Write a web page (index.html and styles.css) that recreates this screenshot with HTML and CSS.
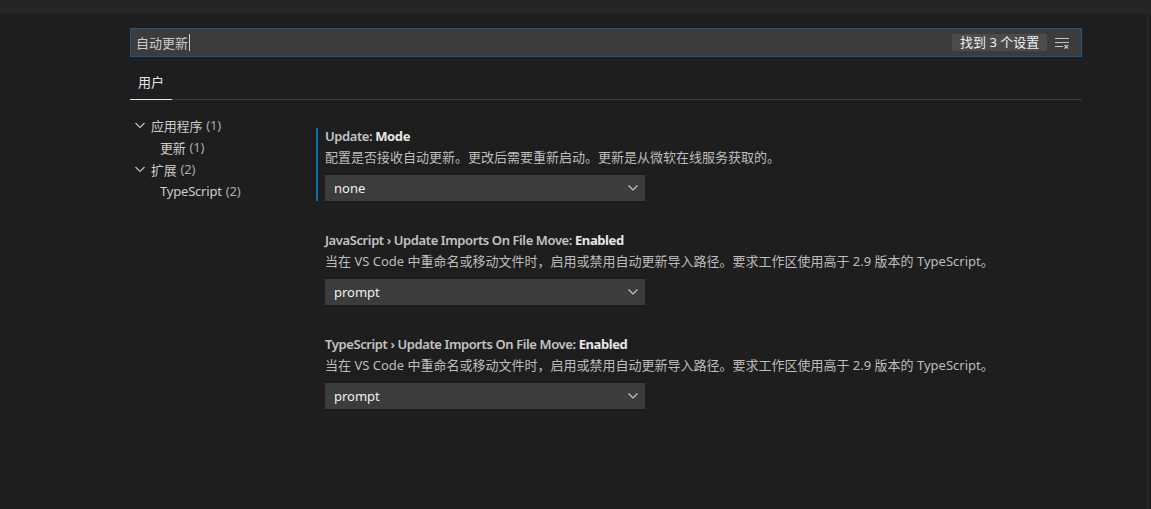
FILE: index.html
```html
<!DOCTYPE html>
<html lang="zh-CN">
<head>
<meta charset="utf-8">
<title>设置</title>
<link rel="stylesheet" href="styles.css">
</head>
<body>
<div class="topbar"></div>
<div class="workspace">
  <div class="page">
    <div class="search">
      <div class="search-text">自动更新<span class="caret"></span></div>
      <div class="badge">找到 3 个设置</div>
      <svg class="clear-icon" width="16" height="16" viewBox="0 0 16 16">
        <path d="M1 3.5h14M1 7.5h14M1 11.5h8" stroke="#c5c5c5" stroke-width="1" fill="none"/>
        <path d="M10.5 10l3.5 3.5M14 10l-3.5 3.5" stroke="#c5c5c5" stroke-width="1.3" fill="none"/>
      </svg>
    </div>
    <div class="tabs">
      <div class="tab active">用户</div>
    </div>
    <div class="body">
      <div class="tree">
        <div class="row lvl0">
          <svg class="chev" width="12" height="12" viewBox="0 0 12 12"><path d="M1.5 4l4.5 4.5L10.5 4" stroke="#c5c5c5" stroke-width="1.1" fill="none"/></svg>
          <span>应用程序</span><span class="count">(1)</span>
        </div>
        <div class="row lvl1"><span>更新</span><span class="count">(1)</span></div>
        <div class="row lvl0">
          <svg class="chev" width="12" height="12" viewBox="0 0 12 12"><path d="M1.5 4l4.5 4.5L10.5 4" stroke="#c5c5c5" stroke-width="1.1" fill="none"/></svg>
          <span>扩展</span><span class="count">(2)</span>
        </div>
        <div class="row lvl1"><span>TypeScript</span><span class="count">(2)</span></div>
      </div>
      <div class="settings">
        <div class="setting focused">
          <div class="title"><span class="cat">Update: </span><span class="label">Mode</span></div>
          <div class="desc">配置是否接收自动更新。更改后需要重新启动。更新是从微软在线服务获取的。</div>
          <div class="select"><span>none</span>
            <svg class="sel-chev" width="10" height="6" viewBox="0 0 10 6"><path d="M0.5 0.5l4.5 4.5L9.5 0.5" stroke="#c5c5c5" stroke-width="1.2" fill="none"/></svg>
          </div>
        </div>
        <div class="setting">
          <div class="title"><span class="cat">JavaScript › Update Imports On File Move: </span><span class="label">Enabled</span></div>
          <div class="desc">当在 VS Code 中重命名或移动文件时，启用或禁用自动更新导入路径。要求工作区使用高于 2.9 版本的 TypeScript。</div>
          <div class="select"><span>prompt</span>
            <svg class="sel-chev" width="10" height="6" viewBox="0 0 10 6"><path d="M0.5 0.5l4.5 4.5L9.5 0.5" stroke="#c5c5c5" stroke-width="1.2" fill="none"/></svg>
          </div>
        </div>
        <div class="setting">
          <div class="title"><span class="cat">TypeScript › Update Imports On File Move: </span><span class="label">Enabled</span></div>
          <div class="desc">当在 VS Code 中重命名或移动文件时，启用或禁用自动更新导入路径。要求工作区使用高于 2.9 版本的 TypeScript。</div>
          <div class="select"><span>prompt</span>
            <svg class="sel-chev" width="10" height="6" viewBox="0 0 10 6"><path d="M0.5 0.5l4.5 4.5L9.5 0.5" stroke="#c5c5c5" stroke-width="1.2" fill="none"/></svg>
          </div>
        </div>
      </div>
    </div>
  </div>
  <div class="edge"></div>
</div>
</body>
</html>
```
FILE: styles.css
```css
* { box-sizing: border-box; }
html, body { margin: 0; padding: 0; height: 100%; }
body {
  background: #1e1e1e;
  color: #cccccc;
  font-family: "Segoe UI", "Noto Sans", "Noto Sans CJK SC", sans-serif;
  font-size: 13px;
  display: flex;
  flex-direction: column;
  overflow: hidden;
}
.topbar { height: 14px; background: #252526; flex: none; }
.workspace { flex: 1; display: flex; }
.page { flex: 1; padding-left: 130px; }
.edge { width: 4px; border-left: 1px solid #2c2c2c; }

.search {
  margin-top: 14px;
  width: 952px;
  height: 29px;
  background: #3c3c3c;
  border: 1px solid #16598a;
  display: flex;
  align-items: center;
  padding-left: 5px;
  padding-right: 11px;
}
.search-text { flex: 1; color: #cccccc; display: flex; align-items: center; line-height: 18px; }
.caret { display: inline-block; width: 1px; height: 17px; background: #d0d0d0; margin-left: 1px; }
.badge {
  background: #4b4b4b;
  color: #f0f0f0;
  height: 17px;
  line-height: 17px;
  padding: 0 8px;
  border-radius: 2px;
  width: 95px;
  text-align: center;
  white-space: nowrap;
}
.clear-icon { margin-left: 7px; }

.tabs {
  width: 952px;
  height: 43px;
  border-bottom: 1px solid #3c3c3c;
  display: flex;
  align-items: flex-end;
}
.tab {
  padding: 6px 8px 0;
  height: 100%;
  display: flex;
  align-items: center;
  color: #e7e7e7;
  margin-bottom: -1px;
}
.tab.active { border-bottom: 1px solid #e7e7e7; }

.body { display: flex; }
.tree { width: 186px; margin-top: 14px; }
.row { height: 22px; display: flex; align-items: center; white-space: nowrap; color: #cccccc; letter-spacing: -0.2px; }
.row .count { margin-left: 4px; color: #ababab; }
.lvl0 { padding-left: 4px; }
.lvl0 .chev { margin-right: 5px; }
.lvl1 { padding-left: 30px; }

.settings { margin-top: 28px; }
.setting {
  height: 73px;
  margin-bottom: 31px;
  padding-left: 7px;
  border-left: 2px solid transparent;
}
.setting.focused { border-left-color: #0e70a8; }
.title { line-height: 16px; height: 16px; font-weight: 600; white-space: nowrap; letter-spacing: -0.4px; }
.title .cat { color: #c4c4c4; }
.title .label { color: #e8e8e8; font-weight: 700; }
.desc { margin-top: 5px; line-height: 16px; color: #bdbdbd; white-space: nowrap; }
.select {
  margin-top: 10px;
  width: 320px;
  height: 26px;
  background: #3c3c3c;
  color: #f0f0f0;
  display: flex;
  align-items: center;
  justify-content: space-between;
  padding-left: 9px;
  padding-right: 7px;
}
```
